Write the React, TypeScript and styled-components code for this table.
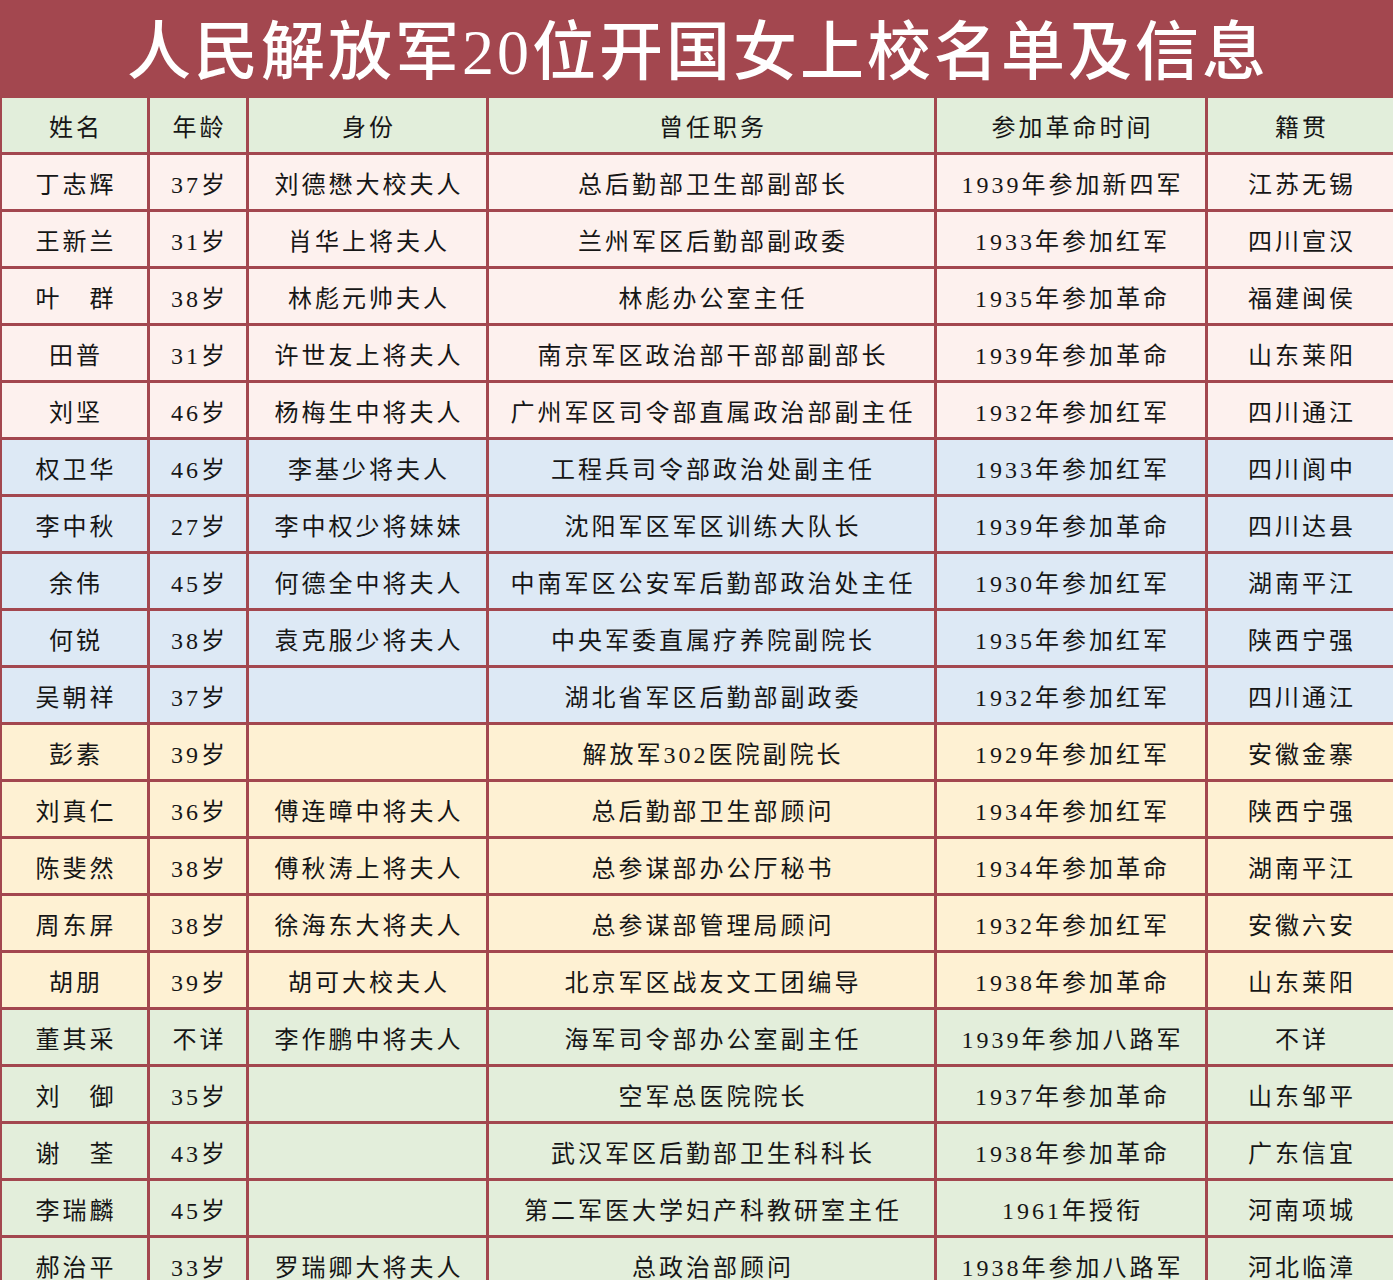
import React from "react";
import styled, { createGlobalStyle } from "styled-components";

const LINE = "#a3474f";

// row group tints, five rows each
const TINTS = ["#fdf1ee", "#dde9f5", "#fef1d3", "#e3eedb"];
const HEADER_BG = "#e2eedb";

const GlobalStyle = createGlobalStyle`
  html, body {
    margin: 0;
    padding: 0;
    background: ${LINE};
    overflow: hidden;
  }
  body {
    font-family: "Liberation Serif", "Noto Sans CJK SC", serif;
  }
`;

const Page = styled.div`
  width: 1393px;
  height: 1280px;
  overflow: hidden;
  background: ${LINE};
`;

const TitleBar = styled.h1`
  margin: 0;
  height: 97px;
  display: flex;
  align-items: center;
  justify-content: center;
  color: #ffffff;
  font-size: 64px;
  font-weight: 500;
  letter-spacing: 3px;
  padding-left: 3px;
  padding-bottom: 6px;
  box-sizing: border-box;
`;

const Grid = styled.div`
  display: grid;
  grid-template-columns: 145px 96px 237px 445px 268px 1fr;
  grid-auto-rows: 54px;
  gap: 3px;
  padding-left: 2px;
  margin-top: 1px;
`;

const Cell = styled.div<{ $bg: string }>`
  display: flex;
  align-items: center;
  justify-content: center;
  background: ${(p) => p.$bg};
  color: #161616;
  font-size: 24px;
  letter-spacing: 3px;
  padding-left: 3px;
  white-space: nowrap;
`;

const HEADERS = ["姓名", "年龄", "身份", "曾任职务", "参加革命时间", "籍贯"];

const ROWS: string[][] = [
  ["丁志辉", "37岁", "刘德懋大校夫人", "总后勤部卫生部副部长", "1939年参加新四军", "江苏无锡"],
  ["王新兰", "31岁", "肖华上将夫人", "兰州军区后勤部副政委", "1933年参加红军", "四川宣汉"],
  ["叶　群", "38岁", "林彪元帅夫人", "林彪办公室主任", "1935年参加革命", "福建闽侯"],
  ["田普", "31岁", "许世友上将夫人", "南京军区政治部干部部副部长", "1939年参加革命", "山东莱阳"],
  ["刘坚", "46岁", "杨梅生中将夫人", "广州军区司令部直属政治部副主任", "1932年参加红军", "四川通江"],
  ["权卫华", "46岁", "李基少将夫人", "工程兵司令部政治处副主任", "1933年参加红军", "四川阆中"],
  ["李中秋", "27岁", "李中权少将妹妹", "沈阳军区军区训练大队长", "1939年参加革命", "四川达县"],
  ["余伟", "45岁", "何德全中将夫人", "中南军区公安军后勤部政治处主任", "1930年参加红军", "湖南平江"],
  ["何锐", "38岁", "袁克服少将夫人", "中央军委直属疗养院副院长", "1935年参加红军", "陕西宁强"],
  ["吴朝祥", "37岁", "", "湖北省军区后勤部副政委", "1932年参加红军", "四川通江"],
  ["彭素", "39岁", "", "解放军302医院副院长", "1929年参加红军", "安徽金寨"],
  ["刘真仁", "36岁", "傅连暲中将夫人", "总后勤部卫生部顾问", "1934年参加红军", "陕西宁强"],
  ["陈斐然", "38岁", "傅秋涛上将夫人", "总参谋部办公厅秘书", "1934年参加革命", "湖南平江"],
  ["周东屏", "38岁", "徐海东大将夫人", "总参谋部管理局顾问", "1932年参加红军", "安徽六安"],
  ["胡朋", "39岁", "胡可大校夫人", "北京军区战友文工团编导", "1938年参加革命", "山东莱阳"],
  ["董其采", "不详", "李作鹏中将夫人", "海军司令部办公室副主任", "1939年参加八路军", "不详"],
  ["刘　御", "35岁", "", "空军总医院院长", "1937年参加革命", "山东邹平"],
  ["谢　荃", "43岁", "", "武汉军区后勤部卫生科科长", "1938年参加革命", "广东信宜"],
  ["李瑞麟", "45岁", "", "第二军医大学妇产科教研室主任", "1961年授衔", "河南项城"],
  ["郝治平", "33岁", "罗瑞卿大将夫人", "总政治部顾问", "1938年参加八路军", "河北临漳"],
];

const App: React.FC = () => {
  return (
    <Page>
      <GlobalStyle />
      <TitleBar>人民解放军20位开国女上校名单及信息</TitleBar>
      <Grid>
        {HEADERS.map((h) => (
          <Cell key={h} $bg={HEADER_BG}>
            {h}
          </Cell>
        ))}
        {ROWS.map((row, i) =>
          row.map((text, j) => (
            <Cell key={`${i}-${j}`} $bg={TINTS[Math.floor(i / 5)]}>
              {text}
            </Cell>
          ))
        )}
      </Grid>
    </Page>
  );
};

export default App;
